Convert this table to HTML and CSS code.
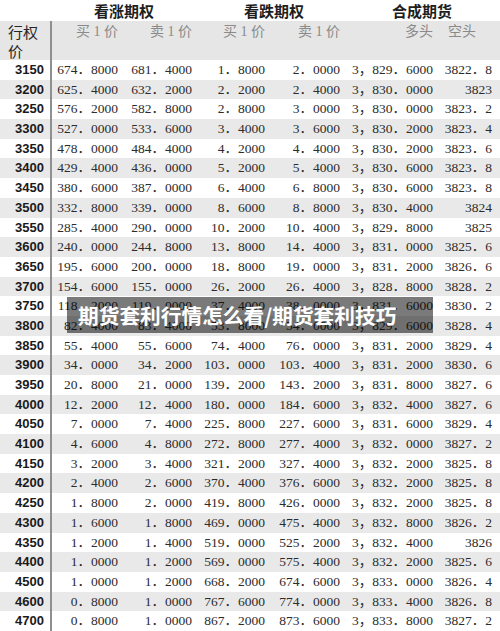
FILE: index.html
```html
<!DOCTYPE html>
<html lang="zh-CN">
<head>
<meta charset="utf-8">
<title>期货套利行情怎么看/期货套利技巧</title>
<link rel="stylesheet" href="styles.css">
</head>
<body>
<div class="sheet">
  <div class="groups">
    <div class="g g-call">看涨期权</div>
    <div class="g g-put">看跌期权</div>
    <div class="g g-syn">合成期货</div>
  </div>
  <div class="head">
    <div class="k">行权价</div>
    <div class="h">买 1 价</div>
    <div class="h">卖 1 价</div>
    <div class="h">买 1 价</div>
    <div class="h">卖 1 价</div>
    <div class="h">多头</div>
    <div class="h h-left">空头</div>
  </div>
  <div class="rows">
    <div class="row"><div class="k">3150</div><div>674．8000</div><div>681．4000</div><div>1．8000</div><div>2．0000</div><div>3，829．6000</div><div>3822．8</div></div>
    <div class="row"><div class="k">3200</div><div>625．4000</div><div>632．2000</div><div>2．2000</div><div>2．4000</div><div>3，830．0000</div><div>3823</div></div>
    <div class="row"><div class="k">3250</div><div>576．2000</div><div>582．8000</div><div>2．8000</div><div>3．0000</div><div>3，830．0000</div><div>3823．2</div></div>
    <div class="row"><div class="k">3300</div><div>527．0000</div><div>533．6000</div><div>3．4000</div><div>3．6000</div><div>3，830．2000</div><div>3823．4</div></div>
    <div class="row"><div class="k">3350</div><div>478．0000</div><div>484．4000</div><div>4．2000</div><div>4．4000</div><div>3，830．2000</div><div>3823．6</div></div>
    <div class="row"><div class="k">3400</div><div>429．4000</div><div>436．0000</div><div>5．2000</div><div>5．4000</div><div>3，830．6000</div><div>3823．8</div></div>
    <div class="row"><div class="k">3450</div><div>380．6000</div><div>387．0000</div><div>6．4000</div><div>6．8000</div><div>3，830．6000</div><div>3823．8</div></div>
    <div class="row"><div class="k">3500</div><div>332．8000</div><div>339．0000</div><div>8．6000</div><div>8．8000</div><div>3，830．4000</div><div>3824</div></div>
    <div class="row"><div class="k">3550</div><div>285．4000</div><div>290．0000</div><div>10．2000</div><div>10．4000</div><div>3，829．8000</div><div>3825</div></div>
    <div class="row"><div class="k">3600</div><div>240．0000</div><div>244．8000</div><div>13．8000</div><div>14．4000</div><div>3，831．0000</div><div>3825．6</div></div>
    <div class="row"><div class="k">3650</div><div>195．6000</div><div>200．0000</div><div>18．8000</div><div>19．0000</div><div>3，831．2000</div><div>3826．6</div></div>
    <div class="row"><div class="k">3700</div><div>154．6000</div><div>155．0000</div><div>26．2000</div><div>26．4000</div><div>3，828．8000</div><div>3828．2</div></div>
    <div class="row"><div class="k">3750</div><div>118．2000</div><div>119．0000</div><div>37．4000</div><div>38．0000</div><div>3，831．6000</div><div>3830．2</div></div>
    <div class="row"><div class="k">3800</div><div>82．4000</div><div>83．4000</div><div>53．8000</div><div>54．0000</div><div>3，829．6000</div><div>3828．4</div></div>
    <div class="row"><div class="k">3850</div><div>55．4000</div><div>55．6000</div><div>74．4000</div><div>76．0000</div><div>3，831．2000</div><div>3829．4</div></div>
    <div class="row"><div class="k">3900</div><div>34．0000</div><div>34．2000</div><div>103．0000</div><div>103．4000</div><div>3，831．2000</div><div>3830．6</div></div>
    <div class="row"><div class="k">3950</div><div>20．8000</div><div>21．0000</div><div>139．2000</div><div>143．2000</div><div>3，831．8000</div><div>3827．6</div></div>
    <div class="row"><div class="k">4000</div><div>12．2000</div><div>12．4000</div><div>180．0000</div><div>184．6000</div><div>3，832．4000</div><div>3827．6</div></div>
    <div class="row"><div class="k">4050</div><div>7．0000</div><div>7．4000</div><div>225．8000</div><div>227．6000</div><div>3，831．6000</div><div>3829．4</div></div>
    <div class="row"><div class="k">4100</div><div>4．6000</div><div>4．8000</div><div>272．8000</div><div>277．4000</div><div>3，832．0000</div><div>3827．2</div></div>
    <div class="row"><div class="k">4150</div><div>3．2000</div><div>3．4000</div><div>321．2000</div><div>327．4000</div><div>3，832．2000</div><div>3825．8</div></div>
    <div class="row"><div class="k">4200</div><div>2．4000</div><div>2．6000</div><div>370．4000</div><div>376．6000</div><div>3，832．2000</div><div>3825．8</div></div>
    <div class="row"><div class="k">4250</div><div>1．8000</div><div>2．0000</div><div>419．8000</div><div>426．0000</div><div>3，832．2000</div><div>3825．8</div></div>
    <div class="row"><div class="k">4300</div><div>1．6000</div><div>1．8000</div><div>469．0000</div><div>475．4000</div><div>3，832．8000</div><div>3826．2</div></div>
    <div class="row"><div class="k">4350</div><div>1．2000</div><div>1．4000</div><div>519．0000</div><div>525．2000</div><div>3，832．4000</div><div>3826</div></div>
    <div class="row"><div class="k">4400</div><div>1．0000</div><div>1．2000</div><div>569．0000</div><div>575．4000</div><div>3，832．2000</div><div>3825．6</div></div>
    <div class="row"><div class="k">4500</div><div>1．0000</div><div>1．2000</div><div>668．2000</div><div>674．6000</div><div>3，833．0000</div><div>3826．4</div></div>
    <div class="row"><div class="k">4600</div><div>0．8000</div><div>1．0000</div><div>767．6000</div><div>774．0000</div><div>3，833．4000</div><div>3826．8</div></div>
    <div class="row"><div class="k">4700</div><div>0．8000</div><div>1．0000</div><div>867．2000</div><div>873．6000</div><div>3，833．8000</div><div>3827．2</div></div>
  </div>
  <div class="banner">期货套利行情怎么看/期货套利技巧</div>
</div>
</body>
</html>
```
FILE: styles.css
```css
* { box-sizing: border-box; }
html, body { margin: 0; padding: 0; background: #fff; }
.sheet {
  position: relative;
  width: 500px;
  height: 631px;
  overflow: hidden;
  background: #fff;
  font-family: "Liberation Serif", "Noto Sans CJK SC", serif;
  color: #333;
}
.groups, .head, .row {
  display: grid;
  grid-template-columns: 52px 70px 74px 73px 75px 93px 63px;
}
.groups {
  height: 21px;
  font-family: "Noto Sans CJK SC", sans-serif;
  font-weight: 700;
  font-size: 15px;
  line-height: 22px;
  color: #1e1e1e;
}
.g { text-align: center; }
.g-call { grid-column: 2 / 4; }
.g-put { grid-column: 4 / 6; padding-left: 8px; }
.g-syn { grid-column: 6 / 8; }
.head {
  height: 39px;
  background: #e6e6e6;
}
.head .k {
  border-right: 2px solid #8f8f8f;
  padding: 1px 4px 0 8px;
  font-family: "Noto Sans CJK SC", sans-serif;
  font-size: 15px;
  line-height: 19px;
  color: #262626;
}
.h {
  text-align: right;
  padding-right: 4px;
  font-size: 14px;
  line-height: 21px;
  color: #8a8a8a;
}
.head .h:nth-child(7) { padding-right: 8px; }
.h-left { text-align: left; padding-left: 11px; }
.row {
  height: 19.7px;
  align-items: center;
  font-family: "Liberation Serif", "Noto Sans CJK JP", serif;
  font-size: 13.5px;
  line-height: 19.7px;
  color: #2c2c2c;
}
.row:nth-child(even) { background: #e9e9e9; }
.row > div {
  text-align: right;
  padding-right: 4px;
  white-space: nowrap;
}
.row > div:last-child { padding-right: 8px; }
.row > .k {
  height: 100%;
  border-right: 2px solid #8f8f8f;
  padding-right: 6px;
  font-family: "Liberation Sans", Arial, sans-serif;
  font-weight: 700;
  font-size: 13px;
  color: #1a1a1a;
}
.banner {
  position: absolute;
  left: 67px;
  top: 297px;
  width: 366px;
  height: 36px;
  padding-left: 11px;
  display: flex;
  align-items: center;
  background: rgba(0, 0, 0, 0.52);
  color: #fff;
  font-family: "Noto Sans CJK SC", sans-serif;
  font-weight: 700;
  font-size: 20.7px;
  white-space: nowrap;
}
```
